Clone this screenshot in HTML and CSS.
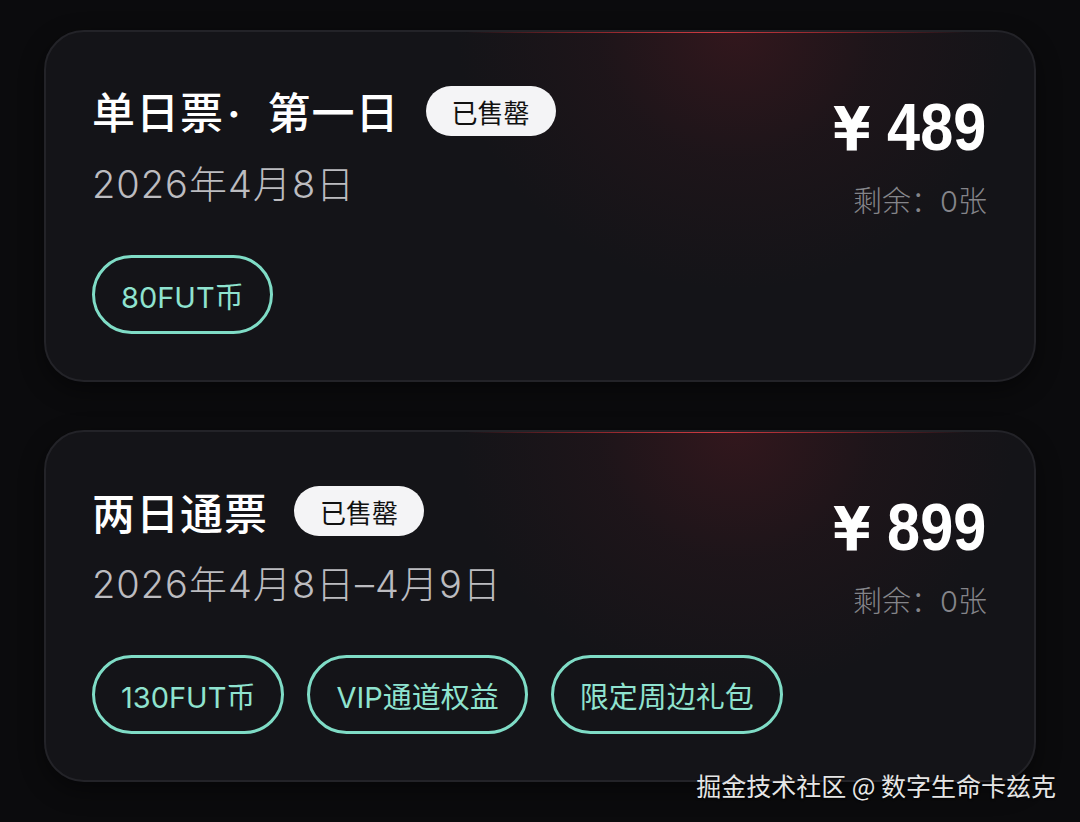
FILE: index.html
```html
<!DOCTYPE html>
<html lang="zh-CN">
<head>
<meta charset="utf-8">
<title>票种</title>
<link rel="stylesheet" href="styles.css">
</head>
<body>
<main class="list">
  <section class="card">
    <div class="head">
      <div class="info">
        <div class="title-row">
          <h2 class="title">单日票<span class="dot">· </span>第一日</h2>
          <span class="sold">已售罄</span>
        </div>
        <div class="date">2026年4月8日</div>
      </div>
      <div class="price-box">
        <div class="price"><span class="yen">¥</span> 489</div>
        <div class="left">剩余：0张</div>
      </div>
    </div>
    <div class="tags">
      <span class="tag">80FUT币</span>
    </div>
  </section>

  <section class="card">
    <div class="head">
      <div class="info">
        <div class="title-row">
          <h2 class="title">两日通票</h2>
          <span class="sold">已售罄</span>
        </div>
        <div class="date">2026年4月8日–4月9日</div>
      </div>
      <div class="price-box">
        <div class="price"><span class="yen">¥</span> 899</div>
        <div class="left">剩余：0张</div>
      </div>
    </div>
    <div class="tags">
      <span class="tag">130FUT币</span>
      <span class="tag">VIP通道权益</span>
      <span class="tag">限定周边礼包</span>
    </div>
  </section>
</main>
<div class="watermark">掘金技术社区 @ 数字生命卡兹克</div>
</body>
</html>
```

FILE: styles.css
```css
* { box-sizing: border-box; }

html, body {
  margin: 0;
  padding: 0;
  background: #0b0b0d;
  width: 1080px;
  height: 822px;
  overflow: hidden;
}

body {
  font-family: "Inter", "Noto Sans CJK SC", sans-serif;
  color: #fff;
  position: relative;
}

.list {
  display: flex;
  flex-direction: column;
  gap: 48px;
  padding: 30px 0 0 44px;
}

.card {
  position: relative;
  width: 992px;
  height: 352px;
  border-radius: 40px;
  background: #141418;
  border: 2px solid #232328;
  box-shadow: 0 8px 24px rgba(0,0,0,0.45);
  padding: 54px 47px 0 46px;
  overflow: hidden;
}

.card::before {
  content: "";
  position: absolute;
  left: 420px;
  top: -2px;
  width: 500px;
  height: 3px;
  background: linear-gradient(90deg, rgba(220,50,55,0) 0%, rgba(220,50,55,0.6) 25%, rgba(240,70,75,1) 50%, rgba(220,50,55,0.6) 75%, rgba(220,50,55,0) 100%);
  filter: blur(0.6px);
}

.card::after {
  content: "";
  position: absolute;
  left: 410px;
  top: -2px;
  width: 560px;
  height: 260px;
  background: radial-gradient(ellipse 50% 100% at 50% 0%, rgba(120,30,40,0.3) 0%, rgba(90,25,35,0.13) 50%, rgba(60,20,30,0) 100%);
  pointer-events: none;
}

.head {
  display: flex;
  justify-content: space-between;
  align-items: flex-start;
  height: 120px;
  position: relative;
  z-index: 1;
}

.title-row {
  display: flex;
  align-items: center;
  gap: 26px;
  height: 50px;
}

.title {
  margin: 0;
  font-family: "Noto Sans CJK SC", sans-serif;
  font-weight: 500;
  font-size: 43px;
  line-height: 50px;
  letter-spacing: 1px;
  color: #ffffff;
  white-space: nowrap;
}

.dot {
  font-family: "Inter", sans-serif;
  font-weight: 600;
  letter-spacing: 0;
  margin-left: 3px;
  margin-right: 16px;
}

.sold {
  display: inline-flex;
  align-items: center;
  justify-content: center;
  height: 50px;
  width: 130px;
  border-radius: 25px;
  background: #f4f4f6;
  color: #111;
  font-family: "Noto Sans CJK SC", sans-serif;
  font-size: 26px;
  font-weight: 400;
}

.date {
  margin-top: 26px;
  font-family: "Inter", "Noto Sans CJK SC", sans-serif;
  font-weight: 300;
  font-size: 38px;
  line-height: 44px;
  color: #bcbcc0;
  letter-spacing: 1px;
  white-space: nowrap;
}

.price-box {
  display: flex;
  flex-direction: column;
  align-items: flex-end;
}

.price {
  display: inline-block;
  font-family: "Liberation Sans", "Arial", sans-serif;
  font-weight: 700;
  font-size: 66px;
  line-height: 80px;
  margin-top: 1px;
  margin-right: 1px;
  color: #fff;
  transform: scaleX(0.9);
  transform-origin: right center;
  white-space: nowrap;
}

.yen {
  font-family: "DejaVu Sans", sans-serif;
  font-weight: 700;
  font-size: 60px;
}

.left {
  margin-top: 15px;
  font-family: "Inter", "Noto Sans CJK SC", sans-serif;
  font-weight: 300;
  font-size: 29px;
  line-height: 36px;
  color: #85858a;
}

.tags {
  display: flex;
  gap: 23px;
  margin-top: 49px;
  position: relative;
  z-index: 1;
}

.tag {
  display: inline-flex;
  align-items: center;
  height: 79px;
  padding: 0 26px;
  border: 3px solid #7fdcc6;
  border-radius: 40px;
  font-family: "Inter", "Noto Sans CJK SC", sans-serif;
  font-size: 29px;
  font-weight: 400;
  color: #8fe3cf;
}

.watermark {
  position: absolute;
  right: 24px;
  top: 768px;
  font-family: "Noto Sans CJK SC", sans-serif;
  font-size: 25px;
  line-height: 34px;
  color: #e6e6e6;
  text-shadow: 0 1px 2px rgba(0,0,0,0.8);
}
```
